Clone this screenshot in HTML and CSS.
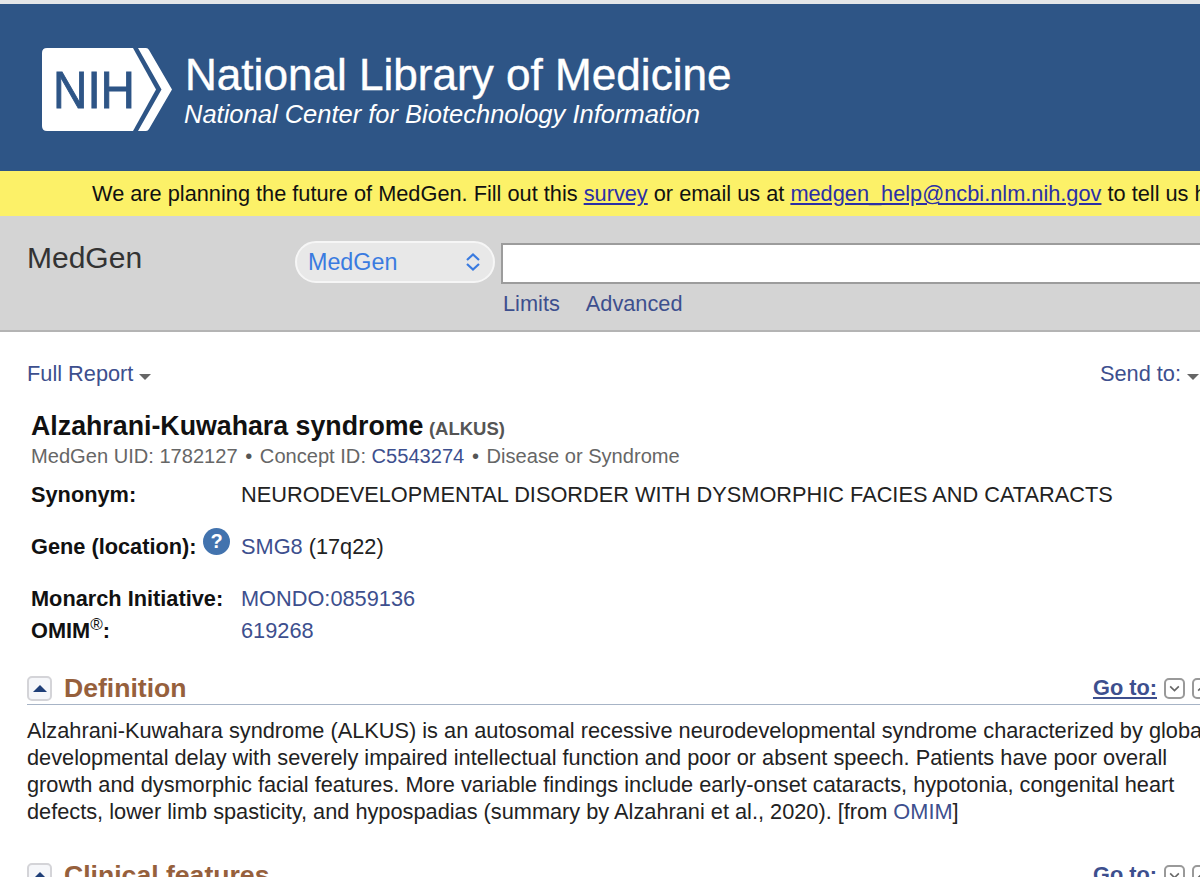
FILE: index.html
```html
<!DOCTYPE html>
<html lang="en">
<head>
<meta charset="utf-8">
<title>Alzahrani-Kuwahara syndrome - MedGen - NCBI</title>
<link rel="stylesheet" href="styles.css">
</head>
<body>
<div class="page">
  <header class="masthead">
    <svg class="logo" viewBox="0 0 131 83" width="131" height="83" aria-label="NIH">
      <path d="M5 0H91L114 41.500L91 83H5Q0 83 0 78V5Q0 0 5 0Z" fill="#fff"/>
      <path d="M96 0H104Q106 0 107 2L130 41.500L107 81Q106 83 104 83H96L119.500 41.500Z" fill="#fff"/>
      <text x="11" y="60" class="logo-text" textLength="82" lengthAdjust="spacingAndGlyphs">NIH</text>
    </svg>
    <div class="brand">
      <div class="brand-name">National Library of Medicine</div>
      <div class="brand-sub">National Center for Biotechnology Information</div>
    </div>
  </header>
  <div class="notice">We are planning the future of MedGen. Fill out this <a href="#">survey</a> or email us at <a href="#">medgen_help@ncbi.nlm.nih.gov</a> to tell us how</div>
  <div class="searchbar">
    <div class="db-name">MedGen</div>
    <div class="select">
      <span>MedGen</span>
      <svg class="updown" viewBox="0 0 16 20" width="16" height="20"><path d="M2 8L8 2.500L14 8M2 12L8 17.500L14 12" fill="none" stroke="#3a7be0" stroke-width="2.200"/></svg>
    </div>
    <div class="search-col">
      <div class="search-input"></div>
      <div class="search-links"><a href="#">Limits</a><a href="#">Advanced</a></div>
    </div>
  </div>
  <main class="content">
    <div class="toolbar">
      <a href="#">Full Report<i class="caret"></i></a>
      <a href="#">Send to:<i class="caret"></i></a>
    </div>
    <div class="record">
      <h1>Alzahrani-Kuwahara syndrome <small>(ALKUS)</small></h1>
      <p class="meta">MedGen UID: 1782127 <span class="dot">•</span> Concept ID: <a href="#">C5543274</a> <span class="dot">•</span> Disease or Syndrome</p>
      <dl class="facts">
        <dt class="r-syn">Synonym:</dt>
        <dd class="r-syn">NEURODEVELOPMENTAL DISORDER WITH DYSMORPHIC FACIES AND CATARACTS</dd>
        <dt class="r-gene">Gene (location):<span class="help">?</span></dt>
        <dd class="r-gene"><a href="#">SMG8</a> (17q22)</dd>
        <dt class="r-mon">Monarch Initiative:</dt>
        <dd class="r-mon"><a href="#">MONDO:0859136</a></dd>
        <dt class="r-omim">OMIM<sup>®</sup>:</dt>
        <dd class="r-omim"><a href="#">619268</a></dd>
      </dl>
    </div>
    <section class="sec">
      <div class="sec-head">
        <span class="toggle"><i></i></span>
        <h2>Definition</h2>
        <div class="goto"><a href="#">Go to:</a>
          <span class="navbox"><svg viewBox="0 0 12 12" width="13" height="13"><path d="M2 4L6 8L10 4" fill="none" stroke="#666" stroke-width="1.500"/></svg></span>
          <span class="navbox"><svg viewBox="0 0 12 12" width="13" height="13"><path d="M2 8L6 4L10 8" fill="none" stroke="#666" stroke-width="1.500"/></svg></span>
        </div>
      </div>
      <p class="sec-text">Alzahrani-Kuwahara syndrome (ALKUS) is an autosomal recessive neurodevelopmental syndrome characterized by global<br>developmental delay with severely impaired intellectual function and poor or absent speech. Patients have poor overall<br>growth and dysmorphic facial features. More variable findings include early-onset cataracts, hypotonia, congenital heart<br>defects, lower limb spasticity, and hypospadias (summary by Alzahrani et al., 2020). [from <a href="#">OMIM</a>]</p>
    </section>
    <section class="sec sec-next">
      <div class="sec-head">
        <span class="toggle"><i></i></span>
        <h2>Clinical features</h2>
        <div class="goto"><a href="#">Go to:</a>
          <span class="navbox"><svg viewBox="0 0 12 12" width="13" height="13"><path d="M2 4L6 8L10 4" fill="none" stroke="#666" stroke-width="1.500"/></svg></span>
          <span class="navbox"><svg viewBox="0 0 12 12" width="13" height="13"><path d="M2 8L6 4L10 8" fill="none" stroke="#666" stroke-width="1.500"/></svg></span>
        </div>
      </div>
    </section>
  </main>
</div>
</body>
</html>
```
FILE: styles.css
```css
* { box-sizing: border-box; }
html, body { margin: 0; padding: 0; background: #fff; }
body { font-family: "Liberation Sans", Arial, sans-serif; color: #222; }
a { color: #3d4f8e; text-decoration: none; }
.page { width: 1200px; height: 877px; overflow: hidden; border-top: 4px solid #e4e6e8; }

.masthead { height: 167px; background: #2e5586; display: flex; align-items: flex-start; padding: 44px 0 0 42px; gap: 12px; }
.logo { flex: none; }
.logo-text { font-family: "Liberation Sans", Arial, sans-serif; font-size: 51px; fill: #2e5586; stroke: #2e5586; stroke-width: .9px; }
.brand { color: #fff; padding-top: 2px; }
.brand-name { font-size: 44.100px; line-height: 50px; white-space: nowrap; -webkit-text-stroke: .4px #fff; }
.brand-sub { font-size: 25.500px; line-height: 28px; font-style: italic; white-space: nowrap; margin-left: -1px; }

.notice { height: 45px; background: #fcf168; color: #111; font-size: 21.750px; line-height: 45px; padding-left: 92px; white-space: nowrap; overflow: hidden; }
.notice a { color: #2b2fa6; text-decoration: underline; }

.searchbar { height: 116px; background: #d4d4d4; border-bottom: 2px solid #b4b4b4; display: flex; align-items: flex-start; padding: 25px 0 0 27px; }
.db-name { width: 268px; font-size: 30px; line-height: 34px; color: #333; }
.select { width: 200px; height: 42px; margin-right: 6px; border: 2px solid #f6f6f6; border-radius: 21px; background: #e8e8e8; color: #3a7be0; font-size: 23.300px; display: flex; align-items: center; justify-content: space-between; padding: 0 12px 0 11px; }
.search-col { flex: 1; min-width: 0; padding-top: 2px; }
.search-input { height: 41px; background: #fff; border: 2px solid #9c9c9c; border-right: 0; }
.search-links { display: flex; gap: 26px; font-size: 21.750px; line-height: 24px; padding: 8px 0 0 2px; }

.content { padding: 0 0 0 27px; }
.toolbar { display: flex; justify-content: space-between; font-size: 21.750px; line-height: 24px; padding-top: 30px; padding-right: 1px; }
.caret { display: inline-block; width: 0; height: 0; margin-left: 6px; vertical-align: 1px; border: 6px solid transparent; border-top: 6px solid #666; border-bottom: 0; }

.record { padding-left: 4px; }
h1 { margin: 25px 0 0; font-size: 26.750px; line-height: 30px; font-weight: bold; color: #111; white-space: nowrap; }
h1 small { font-size: 18.500px; color: #555; margin-left: -2px; }
.meta { margin: 0; font-size: 20.100px; line-height: 24px; color: #666; white-space: nowrap; }
.dot { color: #555; margin: 0 2px; }

.facts { display: grid; grid-template-columns: 210px 1fr; margin: 15px 0 0; font-size: 21.750px; line-height: 24px; align-items: start; white-space: nowrap; }
.facts dt { font-weight: bold; color: #111; position: relative; }
.facts dd { margin: 0; color: #222; }
.r-gene { margin-top: 28px !important; }
.r-mon { margin-top: 28px !important; }
.r-omim { margin-top: 8px !important; }
.facts sup { font-size: 17px; line-height: 0; font-weight: normal; }
.help { position: absolute; left: 172px; top: -7px; width: 27px; height: 27px; border-radius: 50%; background: #4273ae; color: #fff; font-size: 20px; line-height: 27px; text-align: center; font-weight: bold; }

.sec { margin-top: 30px; }
.sec-head { display: flex; align-items: center; height: 32px; width: 1186px; border-bottom: 1px solid #a7b4c6; padding-bottom: 1px; }
.toggle { width: 25px; height: 25px; margin-right: 12px; border: 2px solid #d4d4d8; border-radius: 5px; background: #f6f7fa; display: flex; align-items: center; justify-content: center; }
.toggle i { width: 0; height: 0; border: 7px solid transparent; border-bottom: 7px solid #1f3f78; border-top: 0; }
h2 { margin: 0; font-size: 26.600px; line-height: 30px; color: #96603c; font-weight: bold; white-space: nowrap; }
.goto { margin-left: auto; display: flex; align-items: center; gap: 7px; font-size: 21.750px; font-weight: bold; }
.goto a { color: #3d4f8e; text-decoration: underline; }
.navbox { width: 21px; height: 21px; border: 2px solid #999; border-radius: 5px; display: flex; align-items: center; justify-content: center; background: #fff; }
.sec-text { margin: 12px 0 0; font-size: 21.750px; line-height: 27px; color: #222; white-space: nowrap; }
.sec-next { margin-top: 35px; }
```
